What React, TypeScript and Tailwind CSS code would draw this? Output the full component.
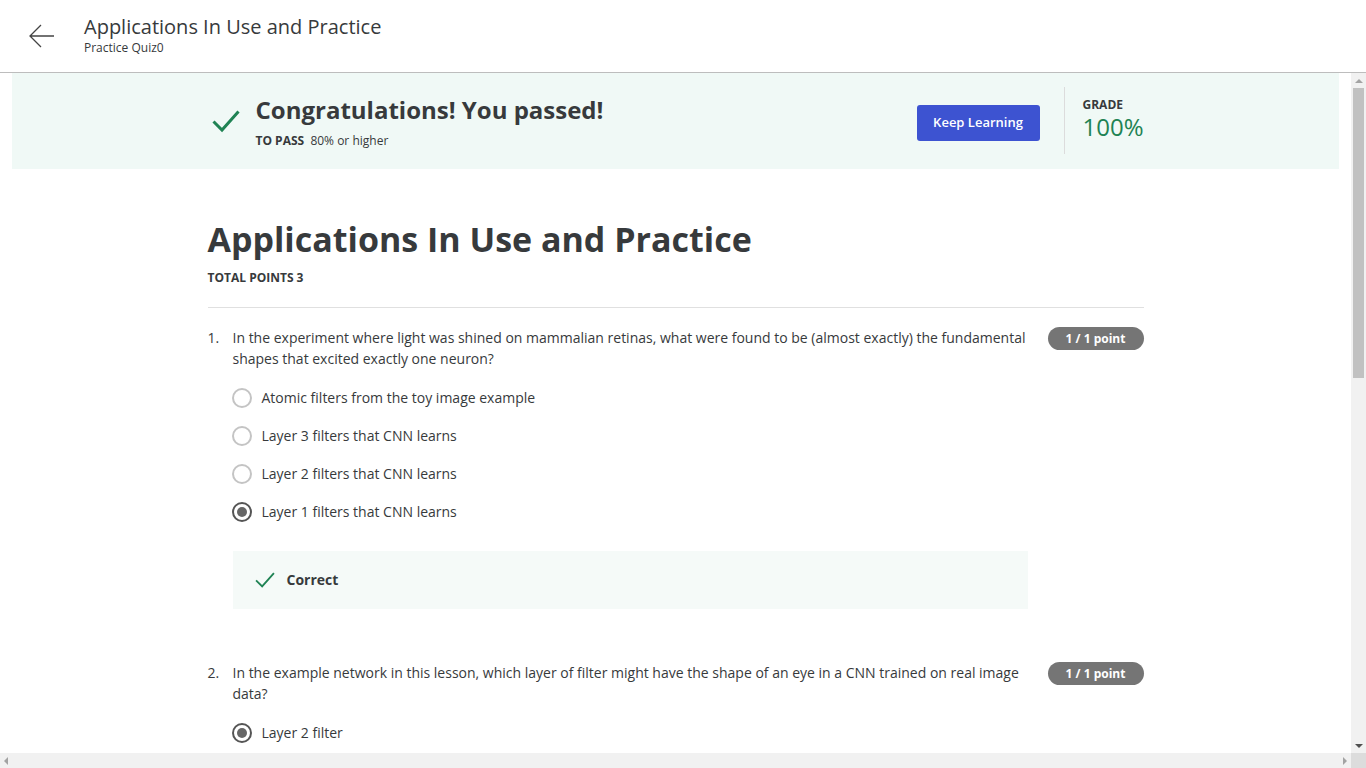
import React from 'react';

const font = { fontFamily: '"Open Sans", "Noto Sans", sans-serif' };

interface Question {
  num: number;
  text: string;
  options: string[];
  selected: number;
  correct?: boolean;
}

const questions: Question[] = [
  {
    num: 1,
    text: 'In the experiment where light was shined on mammalian retinas, what were found to be (almost exactly) the fundamental shapes that excited exactly one neuron?',
    options: [
      'Atomic filters from the toy image example',
      'Layer 3 filters that CNN learns',
      'Layer 2 filters that CNN learns',
      'Layer 1 filters that CNN learns',
    ],
    selected: 3,
    correct: true,
  },
  {
    num: 2,
    text: 'In the example network in this lesson, which layer of filter might have the shape of an eye in a CNN trained on real image data?',
    options: ['Layer 2 filter', 'Layer 3 filter', 'Layer 1 filter'],
    selected: 0,
    correct: true,
  },
];

function Check({ className, strokeWidth = 3 }: { className?: string; strokeWidth?: number }) {
  return (
    <svg viewBox="0 0 28 24" className={className} fill="none" stroke="currentColor" strokeWidth={strokeWidth}>
      <path d="M1.5 12.5 L10 21 L26.5 2.5" />
    </svg>
  );
}

function Radio({ checked }: { checked: boolean }) {
  return checked ? (
    <span className="w-5 h-5 rounded-full border-2 border-[#555] flex items-center justify-center shrink-0">
      <span className="w-[10px] h-[10px] rounded-full bg-[#666]" />
    </span>
  ) : (
    <span className="w-5 h-5 rounded-full border-2 border-[#c4c4c4] shrink-0" />
  );
}

function QuestionBlock({ q }: { q: Question }) {
  return (
    <div className="pt-[19px] pb-[34px]">
      <div className="flex items-start">
        <span className="w-[25px] shrink-0 text-sm leading-[21px] text-[#373a3c]">{q.num}.</span>
        <p className="w-[795px] text-sm leading-[21px] text-[#373a3c]">{q.text}</p>
        <span className="ml-auto h-[23px] w-[96px] rounded-full bg-[#757575] text-white text-xs font-bold flex items-center justify-center">
          1 / 1 point
        </span>
      </div>
      <div className="ml-6 mt-[10px]">
        {q.options.map((o, i) => (
          <div key={o} className="flex items-center gap-[10px] h-[38px]">
            <Radio checked={i === q.selected} />
            <span className="text-sm text-[#373a3c]">{o}</span>
          </div>
        ))}
      </div>
      {q.correct && (
        <div className="ml-[25px] mt-[20px] w-[795px] h-[58px] bg-[#f5faf8] flex items-center pl-[22px] gap-3">
          <Check className="w-5 h-[18px] text-[#1f8354]" strokeWidth={2.6} />
          <span className="text-sm font-bold text-[#373a3c]">Correct</span>
        </div>
      )}
    </div>
  );
}

function Arrow({ dir }: { dir: 'up' | 'down' | 'left' | 'right' }) {
  const cls = {
    up: 'border-x-[4px] border-x-transparent border-b-[4px] border-b-[#a3a3a3]',
    down: 'border-x-[4px] border-x-transparent border-t-[4px] border-t-[#505050]',
    left: 'border-y-[4px] border-y-transparent border-r-[4px] border-r-[#a3a3a3]',
    right: 'border-y-[4px] border-y-transparent border-l-[4px] border-l-[#a3a3a3]',
  }[dir];
  return <span className={`w-0 h-0 ${cls}`} />;
}

export default function App() {
  return (
    <div className="h-screen flex flex-col bg-white overflow-hidden" style={font}>
      <header className="h-[73px] shrink-0 border-b border-[#bdbdbd] flex items-center">
        <button className="w-[84px] h-full flex items-center pl-[29px] text-[#444]">
          <svg viewBox="0 0 26 24" className="w-[26px] h-[24px]" fill="none" stroke="currentColor" strokeWidth={1.3}>
            <path d="M1 12 H25 M12 1 L1 12 L12 23" />
          </svg>
        </button>
        <div className="flex flex-col -mt-[2px]">
          <h1 className="text-xl leading-[26px] text-[#373a3c]">Applications In Use and Practice</h1>
          <span className="text-xs leading-4 text-[#373a3c]">Practice Quiz0</span>
        </div>
      </header>

      <div className="flex-1 min-h-0 flex flex-col">
        <div className="flex-1 min-h-0 flex">
          <main className="flex-1 min-w-0 overflow-hidden">
            <section className="mx-3 h-[96px] bg-[#f0f9f6]">
              <div className="max-w-[936px] mx-auto h-full flex items-center">
                <Check className="ml-1 w-7 h-6 text-[#1f8354]" />
                <div className="ml-4 flex flex-col">
                  <h2 className="text-2xl font-bold leading-[32px] text-[#373a3c]">Congratulations! You passed!</h2>
                  <p className="mt-[7px] text-xs leading-4 text-[#373a3c]">
                    <span className="font-bold">TO PASS</span>&nbsp; 80% or higher
                  </p>
                </div>
                <button className="ml-auto mt-1 w-[123px] h-9 rounded-[3px] bg-[#3d53d1] text-white text-[13px] font-semibold">
                  Keep Learning
                </button>
                <div className="ml-6 h-[67px] mt-[-1px] border-l border-[#dcdcdc] pl-[18px] w-[80px] flex flex-col">
                  <span className="mt-[10px] text-xs font-bold leading-4 text-[#373a3c]">GRADE</span>
                  <span className="text-2xl leading-7 text-[#1f8354]">100%</span>
                </div>
              </div>
            </section>

            <div className="max-w-[936px] mx-auto pt-[47px]">
              <h1 className="text-[34px] font-bold leading-[46px] text-[#373a3c]">Applications In Use and Practice</h1>
              <p className="mt-[7px] text-xs leading-[18px] font-bold text-[#373a3c]">TOTAL POINTS 3</p>
              <div className="mt-5 border-t border-[#e0e0e0]" />
              {questions.map((q) => (
                <QuestionBlock key={q.num} q={q} />
              ))}
            </div>
          </main>
          <div className="w-[15px] shrink-0 bg-[#f1f1f1] flex flex-col items-center">
            <div className="h-[15px] flex items-center justify-center"><Arrow dir="up" /></div>
            <div className="w-[11px] h-[290px] bg-[#c1c1c1]" />
            <div className="flex-1" />
            <div className="h-[15px] flex items-center justify-center"><Arrow dir="down" /></div>
          </div>
        </div>
        <div className="h-[15px] shrink-0 flex">
          <div className="flex-1 bg-[#f1f1f1] flex items-center justify-between px-[4px]">
            <Arrow dir="left" />
            <Arrow dir="right" />
          </div>
          <div className="w-[15px] bg-[#dcdcdc]" />
        </div>
      </div>
    </div>
  );
}
